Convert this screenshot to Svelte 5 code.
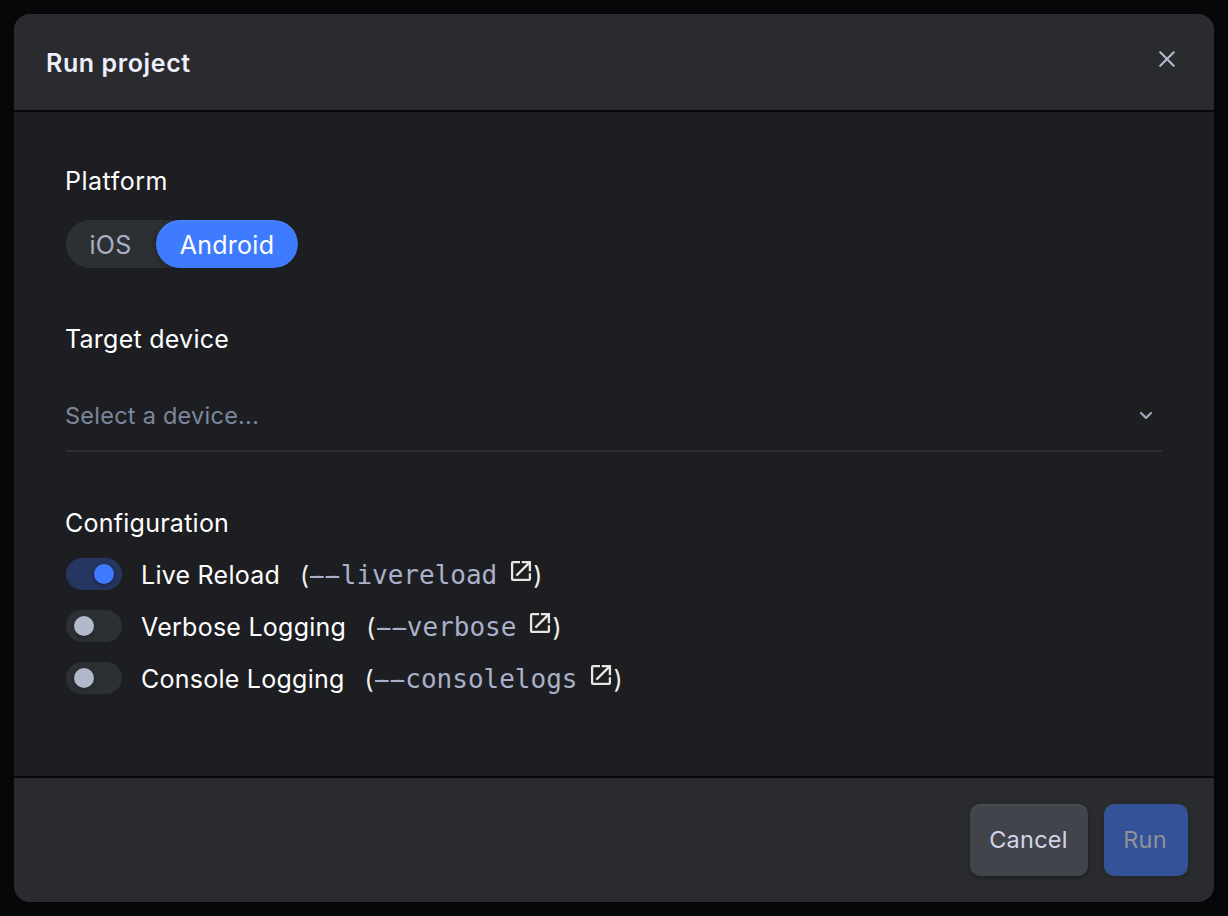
<script>
  let platform = $state('Android');
  const platforms = ['iOS', 'Android'];
  let options = $state([
    { label: 'Live Reload', flag: 'livereload', on: true },
    { label: 'Verbose Logging', flag: 'verbose', on: false },
    { label: 'Console Logging', flag: 'consolelogs', on: false }
  ]);
</script>

<div class="backdrop">
  <div class="dialog" role="dialog" aria-labelledby="title">
    <header>
      <h1 id="title">Run project</h1>
      <button class="close" aria-label="Close">
        <svg width="16" height="16" viewBox="0 0 16 16"><path d="M1.3 1.3 14.7 14.7M14.7 1.3 1.3 14.7" /></svg>
      </button>
    </header>

    <main>
      <section class="platform">
        <h2>Platform</h2>
        <div class="segments">
          {#each platforms as p}
            <button class="segment" class:active={platform === p} onclick={() => (platform = p)}>{p}</button>
          {/each}
        </div>
      </section>

      <section class="target">
        <h2>Target device</h2>
        <div class="select">
          <span>Select a device...</span>
          <svg width="14" height="9" viewBox="0 0 14 9"><path d="M2 2 7 6.8 12 2" /></svg>
        </div>
      </section>

      <section class="config">
        <h2>Configuration</h2>
        {#each options as o}
          <div class="option">
            <button class="toggle" class:on={o.on} role="switch" aria-checked={o.on} aria-label={o.label} onclick={() => (o.on = !o.on)}>
              <i></i>
            </button>
            <span class="label">{o.label}</span>
            <span class="hint">(<code><b>--</b>{o.flag}</code><svg width="22" height="22" viewBox="0 0 22 22">
                <path d="M10 2.1H3Q2.1 2.1 2.1 3V19Q2.1 19.9 3 19.9H19Q19.9 19.9 19.9 19V13.2M11.8 2.1H19.9V11.3M19.4 2.6 6.4 15.6" />
              </svg>)</span>
          </div>
        {/each}
      </section>
    </main>

    <footer>
      <button class="btn cancel">Cancel</button>
      <button class="btn run" disabled>Run</button>
    </footer>
  </div>
</div>

<style>
  :global(body) {
    margin: 0;
    background: #060709;
  }
  * {
    box-sizing: border-box;
  }
  button {
    border: 0;
    padding: 0;
    margin: 0;
    background: none;
    font: inherit;
    letter-spacing: inherit;
  }
  svg {
    display: block;
    fill: none;
  }
  .backdrop {
    height: 916px;
    padding: 14px;
    font-family: Inter, sans-serif;
    font-size: 25px;
    letter-spacing: 0.25px;
    color: #fff;
    background: #060709;
  }
  .dialog {
    height: 888px;
    display: flex;
    flex-direction: column;
    border-radius: 16px;
    overflow: hidden;
    background: #1d1e21;
  }
  header {
    height: 98px;
    flex: none;
    display: flex;
    align-items: center;
    justify-content: space-between;
    padding: 0 39px 0 32px;
    background: #2a2b2e;
    border-bottom: 2px solid #09090a;
  }
  h1 {
    margin: 2px 0 0;
    font-size: 25px;
    letter-spacing: 0.6px;
    line-height: 32px;
    font-weight: 600;
    color: #eeeffc;
  }
  .close {
    margin-top: -6px;
  }
  .close svg {
    stroke: #b2b9cb;
    stroke-width: 2.2;
    stroke-linecap: round;
  }
  main {
    flex: 1;
    padding: 51px 52px 0;
  }
  h2 {
    margin: 0 0 0 -1px;
    font-size: 25px;
    line-height: 36px;
    font-weight: 400;
  }
  .platform h2 {
    letter-spacing: 0.5px;
  }
  .segments {
    display: inline-flex;
    height: 48px;
    margin-top: 21px;
    border-radius: 24px;
    background: #2d3033;
    overflow: hidden;
    vertical-align: top;
  }
  .segment {
    width: 90px;
    color: #a9afc2;
    padding: 1px 1px 0 0;
  }
  .segment.active {
    width: 142px;
    padding-right: 0;
    border-radius: 24px;
    background: #3e7bff;
    color: #fff;
    box-shadow: 0 2px 6px rgba(0, 0, 0, 0.3), inset 0 2px 0 rgba(255, 255, 255, 0.06);
  }
  .target {
    margin-top: 53px;
  }
  .select {
    display: flex;
    align-items: center;
    justify-content: space-between;
    height: 72px;
    margin-top: 23px;
    padding-right: 9px;
    border-bottom: 2px solid #2d2e31;
    font-size: 23.5px;
    color: #7c879d;
  }
  .select span {
    margin: 1px 0 0 -1px;
  }
  .select svg {
    stroke: #9ba2b4;
    stroke-width: 2.4;
    stroke-linecap: round;
    stroke-linejoin: round;
  }
  .config {
    margin-top: 53px;
  }
  .config h2 {
    margin-bottom: 7px;
  }
  .option {
    display: flex;
    align-items: center;
    height: 52px;
  }
  .toggle {
    width: 56px;
    height: 32px;
    padding: 6px 8px;
    border-radius: 16px;
    background: #2d3033;
    display: flex;
    flex: none;
  }
  .toggle i {
    width: 20px;
    height: 20px;
    border-radius: 50%;
    background: #b2b9cb;
    box-shadow: 0 2px 4px rgba(0, 0, 0, 0.3);
  }
  .toggle.on {
    background: #263661;
  }
  .toggle.on i {
    margin-left: 20px;
    background: #3e7bff;
  }
  .label {
    margin: 2px 20px 0 19px;
    line-height: 36px;
  }
  .hint {
    display: flex;
    margin-top: 2px;
    line-height: 36px;
    color: #eef0e9;
  }
  .hint svg {
    margin: 3px 1px 0 13px;
    stroke: #e6e6e2;
    stroke-width: 2.3;
  }
  code {
    font-family: "DejaVu Sans Mono", monospace;
    font-size: 26px;
    letter-spacing: 0;
    color: #a9b0c8;
  }
  /* widens each hyphen into a dash that fills most of its cell */
  code b {
    display: inline-block;
    font-weight: 400;
    background: linear-gradient(90deg, transparent 1px, #a9b0c8 1px 14.6px, transparent 14.6px) 0 19px / 15.65px 2px repeat-x;
  }
  footer {
    height: 124px;
    flex: none;
    display: flex;
    align-items: flex-start;
    justify-content: flex-end;
    gap: 16px;
    padding: 26px 26px 0;
    background: #2a2b2e;
    box-shadow: 0 -2px 0 #09090a;
  }
  .btn {
    height: 72px;
    padding-bottom: 2px;
    border-radius: 10px;
    font-size: 23.5px;
    box-shadow: 0 2px 4px rgba(0, 0, 0, 0.3), inset 0 2px 0 rgba(255, 255, 255, 0.05);
  }
  .cancel {
    width: 118px;
    padding-right: 1px;
    background: #42444b;
    color: #d3d5e6;
  }
  .run {
    width: 84px;
    padding-right: 2px;
    background: #345298;
    color: #8f9195;
    box-shadow: 0 2px 4px rgba(0, 0, 0, 0.15);
  }
</style>
